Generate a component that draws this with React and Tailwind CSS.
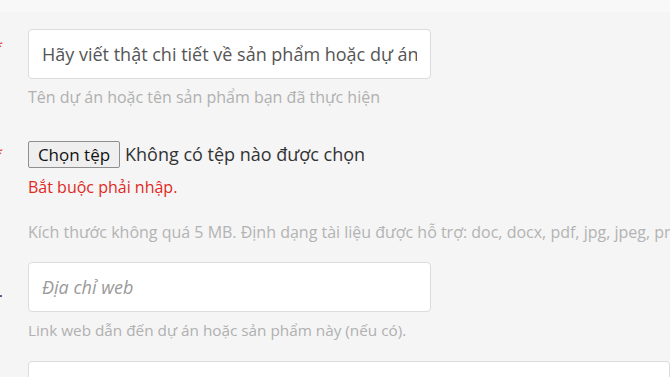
export default function App() {
  const label = "w-[158px] shrink-0 -ml-[130px] pr-[25px] text-right whitespace-nowrap";
  return (
    <div
      className="w-[670px] h-[377px] overflow-hidden bg-[#f5f5f5] relative"
      style={{ fontFamily: '"Open Sans", "Noto Sans", sans-serif' }}
    >
      <div className="h-[12px] bg-[#f8f8f8]" />
      <div className="pt-[17px]">
        {/* Tên dự án */}
        <div className="flex items-start">
          <div className={`${label} pt-[5px] text-[16px] text-[#e74c3c]`}>Tên dự án *</div>
          <div>
            <input
              readOnly
              value="Hãy viết thật chi tiết về sản phẩm hoặc dự án"
              className="w-[403px] h-[50px] bg-white border border-[#dcdcdc] rounded-[4px] px-[13px] text-[18px] text-[#555] outline-none"
            />
            <p className="mt-[8px] text-[16px] leading-[20px] text-[#b0b0b0] whitespace-nowrap">
              Tên dự án hoặc tên sản phẩm bạn đã thực hiện
            </p>
          </div>
        </div>

        {/* Tài liệu */}
        <div className="flex items-start mt-[34px]">
          <div className={`${label} pt-[0px] text-[16px] text-[#e74c3c]`}>Tài liệu *</div>
          <div>
            <div className="flex items-center h-[27px] whitespace-nowrap">
              <button className="h-[27px] w-[92px] bg-[#efefef] border border-[#8f8f8f] rounded-[2px] text-[17px] leading-none text-[#111]">
                Chọn tệp
              </button>
              <span className="ml-[5px] text-[18px] text-[#333]">Không có tệp nào được chọn</span>
            </div>
            <p className="mt-[9px] text-[16px] leading-[20px] text-[#e0281e]">Bắt buộc phải nhập.</p>
            <p className="mt-[25px] text-[16px] leading-[20px] text-[#b3b3b3] whitespace-nowrap">
              Kích thước không quá 5 MB. Định dạng tài liệu được hỗ trợ: doc, docx, pdf, jpg, jpeg, png
            </p>
          </div>
        </div>

        {/* Website */}
        <div className="flex items-start mt-[20px]">
          <div className={`${label} pt-[17px] text-[16px] text-[#2d2f4a]`}>Website.</div>
          <div>
            <input
              placeholder="Địa chỉ web"
              className="w-[403px] h-[50px] bg-white border border-[#dcdcdc] rounded-[4px] px-[13px] text-[18px] italic text-[#555] placeholder:text-[#9a9a9a] outline-none"
            />
            <p className="mt-[8px] text-[15.3px] leading-[20px] text-[#b0b0b0] whitespace-nowrap">
              Link web dẫn đến dự án hoặc sản phẩm này (nếu có).
            </p>
          </div>
        </div>

        {/* Mô tả */}
        <div className="flex items-start mt-[21px]">
          <div className={`${label} text-[16px] text-[#e74c3c]`}></div>
          <div className="w-[700px] h-[120px] bg-white border border-[#dcdcdc] rounded-[4px] px-[13px] pt-[14px] text-[18px] text-[#9a9a9a] whitespace-nowrap">
            Mô tả chi tiết về dự án, sản phẩm, vai trò của bạn
          </div>
        </div>
      </div>
    </div>
  );
}
